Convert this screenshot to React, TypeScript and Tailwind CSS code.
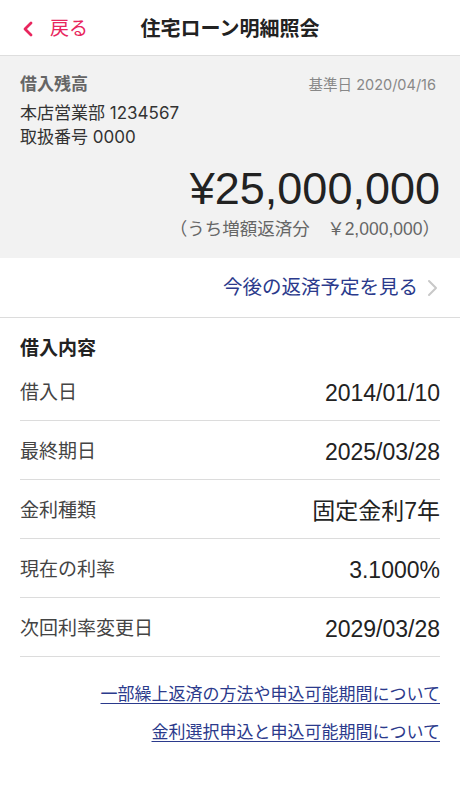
import React from "react";

interface DetailRow {
  label: string;
  value: string;
}

const rows: DetailRow[] = [
  { label: "借入日", value: "2014/01/10" },
  { label: "最終期日", value: "2025/03/28" },
  { label: "金利種類", value: "固定金利7年" },
  { label: "現在の利率", value: "3.1000%" },
  { label: "次回利率変更日", value: "2029/03/28" },
];

const font = {
  fontFamily: '"Liberation Sans", "Noto Sans CJK JP", sans-serif',
};

// small latin text in the reference is wider, Inter is closer there
const wide = {
  fontFamily: 'Inter, "Noto Sans CJK JP", sans-serif',
};

export default function App() {
  return (
    <div className="w-[460px] min-h-[804px] bg-white text-[#222]" style={font}>
      {/* Header */}
      <div className="relative h-[56px] pt-[3px] flex items-center justify-center border-b border-[#dedede]">
        <button className="absolute left-[21px] top-0 pt-[3px] h-full flex items-center gap-[15px] text-[#e8265e]">
          <svg width="14" height="16" viewBox="0 0 14 16" fill="none">
            <path
              d="M10 2 L4 8 L10 14"
              stroke="currentColor"
              strokeWidth="2.8"
              strokeLinecap="round"
              strokeLinejoin="round"
            />
          </svg>
          <span className="text-[19px]">戻る</span>
        </button>
        <h1 className="text-[20px] font-bold text-[#222]">住宅ローン明細照会</h1>
      </div>

      {/* Balance */}
      <div className="bg-[#f2f2f2] h-[202px] px-[20px] pt-[16px]">
        <div className="flex items-center justify-between h-[26px]">
          <span className="text-[17px] font-bold text-[#666]">借入残高</span>
          <span className="text-[14.5px] text-[#888] pr-[4px]" style={wide}>
            基準日 2020/04/16
          </span>
        </div>
        <div className="mt-[3px]" style={wide}>
          <p className="text-[17px] leading-[24px] text-[#333]">本店営業部 1234567</p>
          <p className="text-[17px] leading-[24px] text-[#333]">取扱番号 0000</p>
        </div>
        <p className="text-right text-[45px] leading-[50px] mt-[15px] text-[#222]">
          ¥25,000,000
        </p>
        <p className="text-right text-[17.5px] leading-[22px] mt-[4px] text-[#666]">
          （うち増額返済分　￥2,000,000）
        </p>
      </div>

      {/* Schedule link */}
      <div className="h-[60px] flex items-center justify-end gap-[8px] px-[22px] border-b border-[#dcdcdc]">
        <span className="text-[19.5px] text-[#2b3a8c]">今後の返済予定を見る</span>
        <svg width="12" height="18" viewBox="0 0 12 18" fill="none">
          <path
            d="M3 2 L10 9 L3 16"
            stroke="#c8c8c8"
            strokeWidth="2"
            strokeLinecap="round"
            strokeLinejoin="round"
          />
        </svg>
      </div>

      {/* Details */}
      <div className="px-[20px]">
        <h2 className="pt-[18px] h-[44px] text-[19px] leading-[26px] font-bold text-[#222]">
          借入内容
        </h2>
        {rows.map((row) => (
          <div
            key={row.label}
            className="h-[59px] pt-[4px] flex items-center justify-between border-b border-[#dcdcdc]"
          >
            <span className="text-[19px] text-[#444]">{row.label}</span>
            <span className="text-[23px] text-[#222]">{row.value}</span>
          </div>
        ))}

        <div className="pt-[26px] flex flex-col items-end gap-[14px]">
          <a className="text-[17px] leading-[24px] text-[#2b3a8c] underline underline-offset-[3px]">
            一部繰上返済の方法や申込可能期間について
          </a>
          <a className="text-[17px] leading-[24px] text-[#2b3a8c] underline underline-offset-[3px]">
            金利選択申込と申込可能期間について
          </a>
        </div>
      </div>
    </div>
  );
}
